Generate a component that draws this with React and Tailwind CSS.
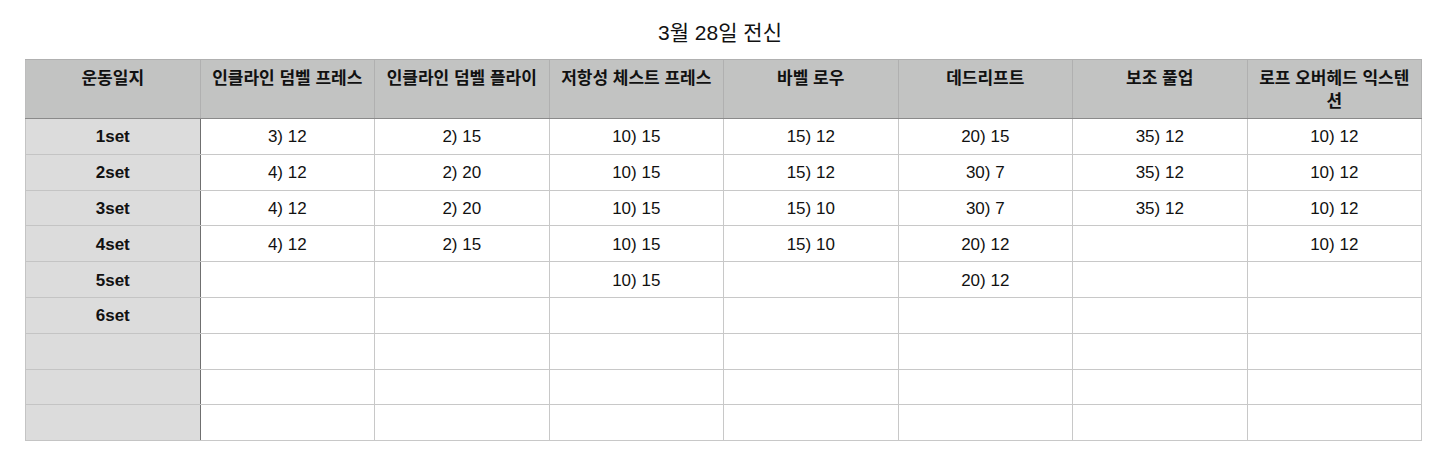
import React from "react";

const headers = [
  "운동일지",
  "인클라인 덤벨 프레스",
  "인클라인 덤벨 플라이",
  "저항성 체스트 프레스",
  "바벨 로우",
  "데드리프트",
  "보조 풀업",
  "로프 오버헤드 익스텐션",
];

const rows = [
  ["1set", "3) 12", "2) 15", "10) 15", "15) 12", "20) 15", "35) 12", "10) 12"],
  ["2set", "4) 12", "2) 20", "10) 15", "15) 12", "30) 7", "35) 12", "10) 12"],
  ["3set", "4) 12", "2) 20", "10) 15", "15) 10", "30) 7", "35) 12", "10) 12"],
  ["4set", "4) 12", "2) 15", "10) 15", "15) 10", "20) 12", "", "10) 12"],
  ["5set", "", "", "10) 15", "", "20) 12", "", ""],
  ["6set", "", "", "", "", "", "", ""],
  ["", "", "", "", "", "", "", ""],
  ["", "", "", "", "", "", "", ""],
  ["", "", "", "", "", "", "", ""],
];

export default function App() {
  return (
    <div
      className="w-[1440px] h-[471px] bg-white text-[#111]"
      style={{ fontFamily: '"Liberation Sans", "Noto Sans CJK KR", sans-serif' }}
    >
      <div className="pt-[21px] pb-[14px] text-center text-[21px] leading-[24px]">
        3월 28일 전신
      </div>
      <table className="ml-[25px] w-[1397px] table-fixed border-collapse">
        <thead>
          <tr className="h-[59px] bg-[#c2c3c2]">
            {headers.map((h, i) => (
              <th
                key={i}
                className={`align-top px-[8px] pt-[7px] text-[17px] leading-[23px] font-bold border border-[#b0b0b0] border-b-[#8a8a8a] ${
                  i === 0 ? "border-l-[#bdbdbd]" : ""
                }`}
              >
                {h}
              </th>
            ))}
          </tr>
        </thead>
        <tbody>
          {rows.map((r, ri) => (
            <tr key={ri} className="h-[35.8px]">
              {r.map((c, ci) => (
                <td
                  key={ci}
                  className={`text-center align-middle pt-[2px] text-[17px] leading-[20px] border ${
                    ci === 0
                      ? "bg-[#dcdcdc] font-bold border-[#c4c4c4] border-r-[#6f6f6f]"
                      : "bg-white border-[#c8c8c8]"
                  } ${ri === 0 ? "border-t-[#8a8a8a]" : ""}`}
                >
                  {c}
                </td>
              ))}
            </tr>
          ))}
        </tbody>
      </table>
    </div>
  );
}
